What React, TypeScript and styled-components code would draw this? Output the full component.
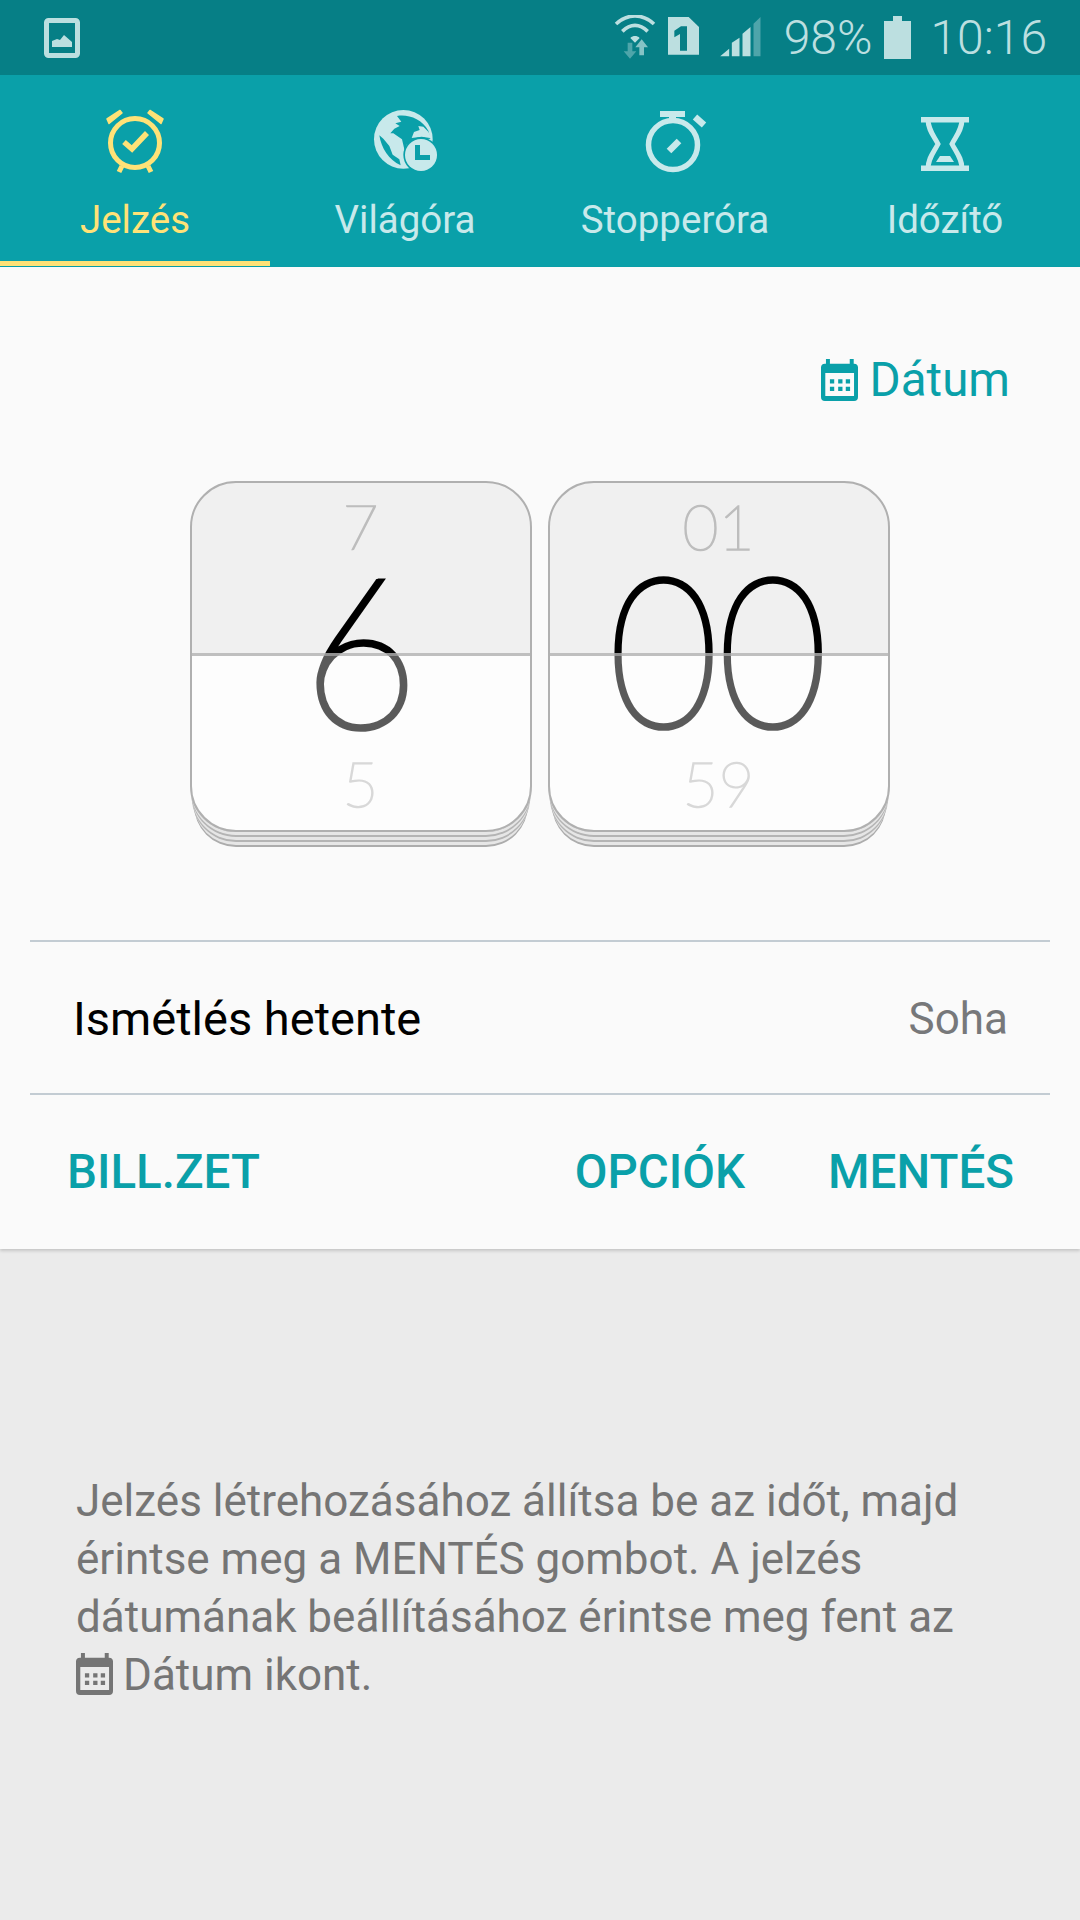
import React from "react";
import styled, { createGlobalStyle } from "styled-components";

const teal = "#0aa0a9";
const tabIdle = "#c8e9eb";
const tabActive = "#ffe277";
const statusInk = "#bcdfe0";
const statusBg = "#067f86";

const GlobalStyle = createGlobalStyle`
  html, body {
    margin: 0;
    padding: 0;
    background: #ebebeb;
    font-family: Roboto, "Liberation Sans", sans-serif;
  }
`;

const Screen = styled.div`
  width: 1080px;
  height: 1920px;
  display: flex;
  flex-direction: column;
  overflow: hidden;
  background: #ebebeb;
`;

const StatusBar = styled.div`
  height: 75px;
  flex: none;
  display: flex;
  align-items: center;
  padding: 0 33px 0 44px;
  background: ${statusBg};
  color: ${statusInk};
  box-sizing: border-box;
`;

const StatusSpacer = styled.div`
  flex: 1;
`;

const StatusText = styled.span<{ $gap: number }>`
  font-size: 48px;
  font-weight: 300;
  line-height: 75px;
  margin-left: ${(p) => p.$gap}px;
`;

const StatusIcon = styled.svg<{ $gap?: number }>`
  display: block;
  flex: none;
  margin-left: ${(p) => p.$gap ?? 0}px;
`;

const TabBar = styled.div`
  height: 192px;
  flex: none;
  display: grid;
  grid-template-columns: repeat(4, 1fr);
  background: ${teal};
`;

const Tab = styled.div<{ $active?: boolean }>`
  display: flex;
  flex-direction: column;
  align-items: center;
  box-sizing: border-box;
  height: 191px;
  padding-top: 34px;
  color: ${(p) => (p.$active ? tabActive : tabIdle)};
  border-bottom: 5px solid ${(p) => (p.$active ? tabActive : "transparent")};
`;

const TabIcon = styled.svg`
  display: block;
  width: 66px;
  height: 66px;
  overflow: visible;
`;

const TabLabel = styled.span`
  margin-top: 20px;
  font-size: 38.5px;
  line-height: 50px;
`;

const Card = styled.div`
  flex: none;
  height: 982px;
  background: #fafafa;
  box-shadow: 0 2px 3px rgba(0, 0, 0, 0.16);
  display: flex;
  flex-direction: column;
`;

const DateRow = styled.div`
  display: flex;
  justify-content: flex-end;
  align-items: center;
  height: 50px;
  margin-top: 88px;
  padding-right: 70px;
  color: ${teal};
  font-size: 47.5px;
  gap: 12px;
`;

const CalendarGlyph = styled.svg`
  display: block;
  width: 37px;
  height: 42px;
  flex: none;
`;

const Pickers = styled.div`
  display: flex;
  justify-content: center;
  gap: 16px;
  margin-top: 76px;
  padding-right: 1px;
`;

const Wheel = styled.div`
  position: relative;
  box-sizing: border-box;
  width: 342px;
  height: 351px;
  border: 2px solid #b0b0b0;
  border-radius: 46px;
  background: linear-gradient(#f0f0f0 0 50%, #fdfdfd 50% 100%);
  display: flex;
  flex-direction: column;
  align-items: center;
  font-family: Lato, Roboto, sans-serif;
  font-weight: 100;
  box-shadow:
    0 4px 0 -1px #e6e6e6,
    0 6px 0 -1px #b4b4b4,
    0 10px 0 -2px #e6e6e6,
    0 12px 0 -2px #b4b4b4,
    0 17px 0 -4px #e6e6e6,
    0 19px 0 -4px #acacac;

  &::after {
    content: "";
    position: absolute;
    left: 0;
    right: 0;
    top: 170px;
    height: 3px;
    background: rgba(170, 170, 170, 0.7);
  }
`;

const SideDigit = styled.div<{ $next?: boolean }>`
  height: ${(p) => (p.$next ? 95 : 90)}px;
  line-height: ${(p) => (p.$next ? 97 : 86)}px;
  font-size: 62px;
  -webkit-text-stroke: 1.6px;
  color: ${(p) => (p.$next ? "#d8d8d8" : "#bdbdbd")};
`;

const MainDigit = styled.div<{ $squeeze: number }>`
  height: 162px;
  line-height: 148px;
  font-size: 209px;
  transform: scaleX(${(p) => p.$squeeze});
`;

const MainDigitInk = styled.span`
  color: transparent;
  -webkit-text-stroke: 5.5px transparent;
  background: linear-gradient(#000 0 calc(50% + 7px), #5a5a5a calc(50% + 7px) 100%);
  -webkit-background-clip: text;
  background-clip: text;
`;

const RepeatRow = styled.div`
  display: flex;
  justify-content: space-between;
  align-items: center;
  box-sizing: border-box;
  height: 155px;
  margin: 108px 30px 0;
  padding: 2px 42px 0 43px;
  border-top: 2px solid #c3ccd3;
  border-bottom: 2px solid #c3ccd3;
`;

const RepeatLabel = styled.span`
  font-size: 47px;
  color: #000;
`;

const RepeatValue = styled.span`
  font-size: 44px;
  color: #77787a;
`;

const Actions = styled.div`
  flex: 1;
  display: flex;
  align-items: center;
  padding: 0 66px 0 67px;
  gap: 83px;
`;

const ActionButton = styled.span<{ $push?: boolean }>`
  font-size: 47.5px;
  font-weight: 500;
  color: ${teal};
  margin-right: ${(p) => (p.$push ? "auto" : "0")};
`;

const Hint = styled.div`
  margin: 223px 0 0 76px;
  font-size: 44px;
  line-height: 58px;
  color: #757575;

  ${CalendarGlyph} {
    display: inline-block;
    vertical-align: -5px;
    margin-right: 10px;
  }
`;

function CalendarIcon() {
  return (
    <CalendarGlyph viewBox="30 38 112 127">
      <path
        fill="currentColor"
        fillRule="evenodd"
        d="M45 38h12v14h60V38h12v14h1a12 12 0 0 1 12 12v89a12 12 0 0 1-12 12H42a12 12 0 0 1-12-12V64a12 12 0 0 1 12-12h3zM43 80v70h87V80z"
      />
      <path fill="currentColor" d="M57 99h13v13H57zM82 99h13v13H82zM105 99h13v13h-13zM57 122h13v13H57zM82 122h13v13H82zM105 122h13v13h-13z" />
    </CalendarGlyph>
  );
}

function AlarmIcon() {
  return (
    <TabIcon viewBox="0 0 66 66">
      <circle cx="33" cy="34" r="24.5" fill="none" stroke="currentColor" strokeWidth="5" />
      <path d="M22 33l8 7 15-16" fill="none" stroke="currentColor" strokeWidth="5.5" />
      <path
        d="M5 10L18 1.5l2 2.5L7 14.5zM61 10L48 1.5l-2 2.5 13 10.5z"
        fill="currentColor"
        stroke="currentColor"
        strokeWidth="1.5"
        strokeLinejoin="round"
      />
      <path d="M20 57l-3 6M46 57l3 6" fill="none" stroke="currentColor" strokeWidth="5" />
    </TabIcon>
  );
}

function GlobeIcon() {
  return (
    <TabIcon viewBox="21 27 198 198">
      <circle cx="115" cy="118" r="88" fill="currentColor" />
      <path
        fill={teal}
        d="M96 48C128 42 170 56 190 92l6 24-46 4-25 14-6 18-8-34-26-18H76l12-14 16-8-13-8 18-5z"
      />
      <path fill={teal} d="M43 106c6 38 28 74 64 90l-4-18-20-14-10-26-18-22z" />
      <path fill="currentColor" d="M140 114l7-18 17-6-4-12 15 2 15 15 10 20-30-5z" />
      <circle cx="168" cy="165" r="53" fill={teal} />
      <circle cx="168" cy="165" r="48" fill="currentColor" />
      <path d="M150 135h15v30h30v15h-45z" fill={teal} />
    </TabIcon>
  );
}

function StopwatchIcon() {
  return (
    <TabIcon viewBox="0 0 66 66">
      <circle cx="31" cy="36" r="24.5" fill="none" stroke="currentColor" strokeWidth="5.5" />
      <rect x="18" y="2" width="25" height="6" fill="currentColor" />
      <rect x="27" y="7" width="7" height="6" fill="currentColor" />
      <path d="M53 8l9 8" fill="none" stroke="currentColor" strokeWidth="6.5" />
      <path d="M27 42l10-10" fill="none" stroke="currentColor" strokeWidth="6.5" />
    </TabIcon>
  );
}

function HourglassIcon() {
  return (
    <TabIcon viewBox="0 0 66 66">
      <path d="M9 8h48v5.500H9zM9 56.500h48V62H9z" fill="currentColor" />
      <path
        d="M16 10c0 11 6 17 10 25-4 8-10 14-10 25M50 10c0 11-6 17-10 25 4 8 10 14 10 25"
        fill="none"
        stroke="currentColor"
        strokeWidth="5"
      />
      <path d="M28 47h10l4 6H24z" fill="currentColor" />
    </TabIcon>
  );
}

function PictureIcon() {
  return (
    <StatusIcon width="36" height="40" viewBox="0 0 36 40">
      <rect x="2.5" y="2.5" width="31" height="35" rx="2" fill="none" stroke={statusInk} strokeWidth="5" />
      <path d="M8 29v-6l5-2 3 1 4-5 8 7v5z" fill={statusInk} />
    </StatusIcon>
  );
}

function WifiIcon() {
  return (
    <StatusIcon width="44" height="46" viewBox="24 27 132 138">
      <path
        d="M33 54C68 22 112 22 147 54M52 76C76 52 104 52 128 76"
        fill="none"
        stroke={statusInk}
        strokeWidth="11"
      />
      <path d="M90 110L76 96C84 88 96 88 104 96z" fill={statusInk} />
      <path d="M68 110h14v26h12l-19 22-19-22h12z" fill={statusInk} opacity="0.4" />
      <path d="M110 100l19 24h-12v24h-14v-24H91z" fill={statusInk} opacity="0.7" />
    </StatusIcon>
  );
}

function SimIcon() {
  return (
    <StatusIcon $gap={11} width="31" height="41" viewBox="190 37 93 123">
      <path d="M190 37h62l31 30v83h-93z" fill={statusInk} />
      <path d="M209 78l20-13h18v73h-21V88l-17 10z" fill={statusBg} />
    </StatusIcon>
  );
}

function SignalIcon() {
  return (
    <StatusIcon $gap={21} width="41" height="41" viewBox="345 35 122 123">
      <path d="M345 153l27-23v23zM380 153v-41l23-15v56zM412 153V85l24-20v88z" fill={statusInk} />
      <path d="M445 153V55l21-20v118z" fill={statusInk} opacity="0.4" />
    </StatusIcon>
  );
}

function BatteryIcon() {
  return (
    <StatusIcon $gap={12} width="27" height="43" viewBox="0 0 27 43">
      <path d="M9 0h9v5h9v38H0V5h9z" fill={statusInk} />
    </StatusIcon>
  );
}

export default function App() {
  return (
    <Screen>
      <GlobalStyle />
      <StatusBar>
        <PictureIcon />
        <StatusSpacer />
        <WifiIcon />
        <SimIcon />
        <SignalIcon />
        <StatusText $gap={23}>98%</StatusText>
        <BatteryIcon />
        <StatusText $gap={19}>10:16</StatusText>
      </StatusBar>
      <TabBar>
        <Tab $active>
          <AlarmIcon />
          <TabLabel>Jelzés</TabLabel>
        </Tab>
        <Tab>
          <GlobeIcon />
          <TabLabel>Világóra</TabLabel>
        </Tab>
        <Tab>
          <StopwatchIcon />
          <TabLabel>Stopperóra</TabLabel>
        </Tab>
        <Tab>
          <HourglassIcon />
          <TabLabel>Időzítő</TabLabel>
        </Tab>
      </TabBar>
      <Card>
        <DateRow>
          <CalendarIcon />
          Dátum
        </DateRow>
        <Pickers>
          <Wheel>
            <SideDigit>7</SideDigit>
            <MainDigit $squeeze={0.95}>
              <MainDigitInk>6</MainDigitInk>
            </MainDigit>
            <SideDigit $next>5</SideDigit>
          </Wheel>
          <Wheel>
            <SideDigit>01</SideDigit>
            <MainDigit $squeeze={0.9}>
              <MainDigitInk>00</MainDigitInk>
            </MainDigit>
            <SideDigit $next>59</SideDigit>
          </Wheel>
        </Pickers>
        <RepeatRow>
          <RepeatLabel>Ismétlés hetente</RepeatLabel>
          <RepeatValue>Soha</RepeatValue>
        </RepeatRow>
        <Actions>
          <ActionButton $push>BILL.ZET</ActionButton>
          <ActionButton>OPCIÓK</ActionButton>
          <ActionButton>MENTÉS</ActionButton>
        </Actions>
      </Card>
      <Hint>
        Jelzés létrehozásához állítsa be az időt, majd
        <br />
        érintse meg a MENTÉS gombot. A jelzés
        <br />
        dátumának beállításához érintse meg fent az
        <br />
        <CalendarIcon />
        Dátum ikont.
      </Hint>
    </Screen>
  );
}
